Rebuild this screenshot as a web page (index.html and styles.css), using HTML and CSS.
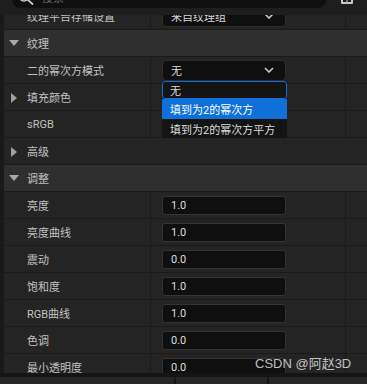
FILE: index.html
```html
<!DOCTYPE html>
<html lang="zh">
<head>
    <meta charset="UTF-8">
    <title>纹理细节</title>
    <link rel="stylesheet" href="styles.css">
</head>
<body>
    <div class="panel">
        <div class="toolbar">
            <div class="search">
                <svg class="search-icon" width="22" height="22" viewBox="0 0 22 22">
                    <circle cx="11" cy="10" r="5" fill="none" stroke="#c8c8c8" stroke-width="1.6"/>
                    <line x1="14.6" y1="13.6" x2="19.5" y2="18" stroke="#c8c8c8" stroke-width="1.8" stroke-linecap="round"/>
                </svg>
                <span class="placeholder">搜索</span>
            </div>
            <svg class="view-icon" width="12" height="12" viewBox="0 0 12 12">
                <rect x="0" y="0" width="12" height="12" rx="1" fill="#c8c8c8"/>
                <rect x="2" y="2" width="3.5" height="3" fill="#1f1f1f"/>
                <rect x="6.5" y="2" width="3.5" height="3" fill="#1f1f1f"/>
                <rect x="2" y="7" width="3.5" height="3" fill="#1f1f1f"/>
                <rect x="6.5" y="7" width="3.5" height="3" fill="#1f1f1f"/>
            </svg>
        </div>

        <div class="rows">
            <div class="row first">
                <div class="name">纹理平台存储设置</div>
                <div class="value">
                    <div class="select">
                        <span>来自纹理组</span>
                        <svg width="10" height="6" viewBox="0 0 10 6"><polyline points="1,1 5,5 9,1" fill="none" stroke="#d0d0d0" stroke-width="1.5"/></svg>
                    </div>
                </div>
                <div class="extra"></div>
            </div>

            <div class="category"><span class="tri-down"></span>纹理</div>

            <div class="row">
                <div class="name">二的幂次方模式</div>
                <div class="value">
                    <div class="select">
                        <span>无</span>
                        <svg width="10" height="6" viewBox="0 0 10 6"><polyline points="1,1 5,5 9,1" fill="none" stroke="#d0d0d0" stroke-width="1.5"/></svg>
                    </div>
                    <div class="popup">
                        <div class="option current">无</div>
                        <div class="option hover">填到为2的幂次方</div>
                        <div class="option">填到为2的幂次方平方</div>
                    </div>
                </div>
                <div class="extra"></div>
            </div>

            <div class="row">
                <div class="name"><span class="tri-right"></span>填充颜色</div>
                <div class="value"></div>
                <div class="extra"></div>
            </div>

            <div class="row">
                <div class="name">sRGB</div>
                <div class="value"></div>
                <div class="extra"></div>
            </div>

            <div class="row plain">
                <div class="name"><span class="tri-right"></span>高级</div>
            </div>

            <div class="category"><span class="tri-down"></span>调整</div>

            <div class="row">
                <div class="name">亮度</div>
                <div class="value"><div class="input">1.0</div></div>
                <div class="extra"></div>
            </div>
            <div class="row">
                <div class="name">亮度曲线</div>
                <div class="value"><div class="input">1.0</div></div>
                <div class="extra"></div>
            </div>
            <div class="row">
                <div class="name">震动</div>
                <div class="value"><div class="input">0.0</div></div>
                <div class="extra"></div>
            </div>
            <div class="row">
                <div class="name">饱和度</div>
                <div class="value"><div class="input">1.0</div></div>
                <div class="extra"></div>
            </div>
            <div class="row">
                <div class="name">RGB曲线</div>
                <div class="value"><div class="input">1.0</div></div>
                <div class="extra"></div>
            </div>
            <div class="row">
                <div class="name">色调</div>
                <div class="value"><div class="input">0.0</div></div>
                <div class="extra"></div>
            </div>
            <div class="row">
                <div class="name">最小透明度</div>
                <div class="value"><div class="input">0.0</div></div>
                <div class="extra"></div>
            </div>
        </div>

        <div class="footer">
            <div class="footer-cell first-cell"></div>
            <div class="footer-cell mid-cell"></div>
            <div class="footer-cell"></div>
        </div>

        <div class="watermark">CSDN @阿赵3D</div>
    </div>
</body>
</html>
```

FILE: styles.css
```css
* {
    box-sizing: border-box;
    margin: 0;
    padding: 0;
}

body {
    background-color: #1a1a1a;
    font-family: Roboto, "Noto Sans CJK SC", sans-serif;
    font-size: 11px;
    color: #c2c2c2;
}

.panel {
    position: relative;
    width: 367px;
    height: 384px;
    overflow: hidden;
}

/* top search bar, scrolled so only its bottom shows */
.toolbar {
    height: 15px;
    background-color: #1e1e1e;
    display: flex;
    align-items: flex-start;
    padding-left: 12px;
    overflow: hidden;
}

.search {
    width: 314px;
    height: 22px;
    margin-top: -14px;
    background-color: #0f0f0f;
    border-radius: 8px;
    display: flex;
    align-items: center;
    padding-left: 1px;
}

.placeholder {
    margin-left: 7px;
    color: #6a6a6a;
    font-size: 11px;
}

.view-icon {
    margin-top: -8px;
    margin-left: 15px;
}

.rows {
    height: 358px;
    overflow: hidden;
    margin-left: 4px;
}

.row {
    display: flex;
    height: 27px;
    background-color: #242424;
    border-bottom: 1px solid #1a1a1a;
}

.row.first {
    margin-top: -12px;
}

.name {
    width: 146px;
    display: flex;
    align-items: center;
    padding-left: 23px;
    position: relative;
}

.value {
    width: 195px;
    border-left: 1px solid #1a1a1a;
    display: flex;
    align-items: center;
    padding-left: 11px;
    position: relative;
}

.extra {
    flex: 1;
    border-left: 1px solid #1a1a1a;
}

.category {
    height: 27px;
    background-color: #2f2f2f;
    border-bottom: 1px solid #1a1a1a;
    display: flex;
    align-items: center;
    padding-left: 5px;
}

.tri-down {
    width: 0;
    height: 0;
    border-left: 5px solid transparent;
    border-right: 5px solid transparent;
    border-top: 6px solid #a8a8a8;
    margin-right: 8px;
}

.tri-right {
    position: absolute;
    left: 7px;
    top: 9px;
    width: 0;
    height: 0;
    border-top: 5px solid transparent;
    border-bottom: 5px solid transparent;
    border-left: 6px solid #a0a0a0;
}

.select {
    width: 124px;
    height: 21px;
    background-color: #0f0f0f;
    border: 1px solid #2c2c2c;
    border-radius: 4px;
    display: flex;
    align-items: center;
    justify-content: space-between;
    padding: 0 11px 0 8px;
    color: #d8d8d8;
}

.input {
    width: 124px;
    height: 19px;
    background-color: #0f0f0f;
    border: 1px solid #343434;
    border-radius: 3px;
    display: flex;
    align-items: center;
    padding-left: 8px;
    color: #dedede;
}

.popup {
    position: absolute;
    left: 11px;
    top: 24px;
    width: 125px;
    background-color: #141414;
    z-index: 2;
}

.option {
    height: 19px;
    display: flex;
    align-items: center;
    padding-left: 8px;
    color: #dcdcdc;
}

.option.current {
    height: 18px;
    border: 1px solid #0e70d8;
    border-radius: 3px;
    padding-left: 7px;
}

.option.hover {
    height: 20px;
    background-color: #0e70d8;
    color: #ffffff;
}

.footer {
    height: 11px;
    border-top: 4px solid #151515;
    background-color: #262626;
    display: flex;
}

.footer-cell {
    flex: 1;
}

.first-cell {
    flex: 0 0 176px;
    border-right: 2px solid #151515;
}

.mid-cell {
    flex: 0 0 93px;
    border-right: 2px solid #151515;
}

.watermark {
    position: absolute;
    left: 255px;
    top: 353px;
    font-family: "Liberation Sans", "Noto Sans CJK SC", sans-serif;
    font-size: 13px;
    color: rgba(225, 225, 225, 0.85);
}
```
